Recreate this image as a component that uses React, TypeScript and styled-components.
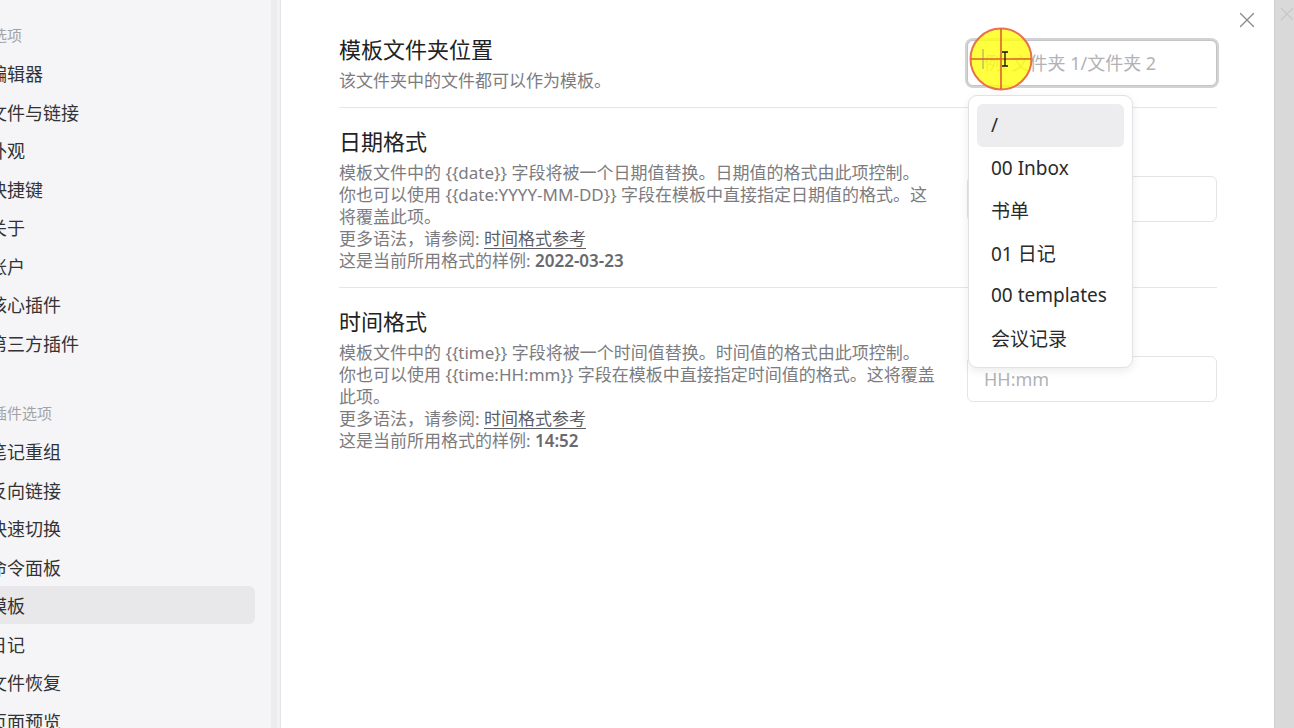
import React from "react";
import styled, { createGlobalStyle } from "styled-components";

const Global = createGlobalStyle`
  html, body { margin: 0; padding: 0; height: 100%; overflow: hidden; background: #ffffff; }
  * { box-sizing: border-box; }
  body { font-family: "Noto Sans", "Noto Sans CJK SC", sans-serif; }
`;

const Page = styled.div`
  display: flex;
  width: 1294px;
  height: 728px;
  overflow: hidden;
  font-family: "Noto Sans", "Noto Sans CJK SC", sans-serif;
`;

const Sidebar = styled.nav`
  flex: 0 0 291px;
  margin-left: -20px;
  background: #f5f5f7;
  padding: 15.25px 16px 0 0;
  display: flex;
  flex-direction: column;
  overflow: hidden;
`;

const NavHeader = styled.div<{ $gap?: number }>`
  flex: 0 0 38.5px;
  display: flex;
  align-items: center;
  padding-left: 12px;
  margin-top: ${(p) => p.$gap ?? 0}px;
  font-size: 15px;
  color: #a3a3a6;
  white-space: nowrap;
`;

const NavItem = styled.div<{ $active?: boolean }>`
  flex: 0 0 38.5px;
  display: flex;
  align-items: center;
  padding-left: 9px;
  font-size: 18px;
  color: #333336;
  border-radius: 6px;
  white-space: nowrap;
  background: ${(p) => (p.$active ? "#e8e8ea" : "transparent")};
`;

const Gutter = styled.div`
  flex: 0 0 10px;
  background: linear-gradient(to right, #ececee 0 6px, #f2f2f4 6px 9px, #e4e4e6 9px 10px);
`;

const Content = styled.main`
  position: relative;
  flex: 1 1 auto;
  background: #ffffff;
  padding: 16px 57px 0 58px;
`;

const CloseButton = styled.div`
  position: absolute;
  top: 12px;
  right: 19px;
  width: 16px;
  height: 16px;
  color: #8c8c8c;
  display: flex;
`;

const SettingItem = styled.section<{ $first?: boolean }>`
  display: flex;
  align-items: center;
  padding: 18px 0 15px;
  border-top: ${(p) => (p.$first ? "none" : "1px solid #e6e6e6")};
`;

const Info = styled.div`
  flex: 1 1 auto;
  padding-right: 24px;
`;

const Name = styled.div`
  font-size: 22px;
  line-height: 30px;
  color: #222224;
  margin-bottom: 6px;
`;

const Desc = styled.div`
  font-size: 17px;
  line-height: 22px;
  color: #7c7c80;
`;

const Link = styled.a`
  color: #5d5d66;
  text-decoration: underline;
  text-underline-offset: 3px;
`;

const Strong = styled.b`
  font-weight: 600;
  color: #6a6a6e;
`;

const Control = styled.div`
  position: relative;
  flex: 0 0 250px;
`;

const TextInput = styled.input<{ $focused?: boolean }>`
  display: block;
  width: 250px;
  height: 46px;
  border: 1px solid ${(p) => (p.$focused ? "#c4c4c6" : "#e4e4e6")};
  box-shadow: ${(p) => (p.$focused ? "0 0 0 2px #d2d2d4" : "none")};
  border-radius: 6px;
  padding: 0 16px;
  font-family: "Noto Sans", "Noto Sans CJK SC", sans-serif;
  font-size: 18px;
  color: #333;
  background: #fff;
  outline: none;
  &::placeholder { color: #b2b2b6; }
`;

const Dropdown = styled.ul`
  position: absolute;
  top: calc(100% + 9px);
  left: 1px;
  width: 165px;
  margin: 0;
  padding: 8px 8px;
  list-style: none;
  background: #fff;
  border: 1px solid #e2e2e4;
  border-radius: 9px;
  box-shadow: 0 3px 10px rgba(0, 0, 0, 0.08);
  z-index: 2;
`;

const Option = styled.li<{ $active?: boolean }>`
  height: 42.5px;
  display: flex;
  align-items: center;
  padding-left: 14px;
  font-size: 19px;
  color: #2a2a2c;
  border-radius: 6px;
  white-space: nowrap;
  background: ${(p) => (p.$active ? "#ededef" : "transparent")};
`;

const CursorMark = styled.svg`
  position: absolute;
  left: 2px;
  top: -13px;
  z-index: 3;
  pointer-events: none;
`;

const Backdrop = styled.div`
  flex: 0 0 19px;
  background: #d9d9d9;
  border-left: 1px solid #cfcfcf;
  padding: 4px 0 0 5px;
  color: #c6c6c6;
`;

const groups = [
  {
    title: "选项",
    items: ["编辑器", "文件与链接", "外观", "快捷键", "关于", "账户", "核心插件", "第三方插件"],
  },
  {
    title: "插件选项",
    items: ["笔记重组", "反向链接", "快速切换", "命令面板", "模板", "日记", "文件恢复", "页面预览"],
  },
];

const folders = ["/", "00 Inbox", "书单", "01 日记", "00 templates", "会议记录"];

const XIcon = ({ size = 16 }: { size?: number }) => (
  <svg width={size} height={size} viewBox="0 0 16 16" fill="none" stroke="currentColor" strokeWidth="1.4" strokeLinecap="round">
    <path d="M1.5 1.5 L14.5 14.5 M14.5 1.5 L1.5 14.5" />
  </svg>
);

export default function App() {
  return (
    <>
      <Global />
      <Page>
        <Sidebar>
          {groups.map((g, gi) => (
            <React.Fragment key={g.title}>
              <NavHeader $gap={gi === 0 ? 0 : 31.5}>{g.title}</NavHeader>
              {g.items.map((it) => (
                <NavItem key={it} $active={it === "模板"}>
                  {it}
                </NavItem>
              ))}
            </React.Fragment>
          ))}
        </Sidebar>
        <Gutter />
        <Content>
          <CloseButton>
            <XIcon />
          </CloseButton>

          <SettingItem $first>
            <Info>
              <Name>模板文件夹位置</Name>
              <Desc>该文件夹中的文件都可以作为模板。</Desc>
            </Info>
            <Control>
              <TextInput $focused placeholder="例: 文件夹 1/文件夹 2" readOnly />
              <CursorMark width="64" height="64" viewBox="0 0 64 64">
                <circle cx="32" cy="32" r="30.5" fill="rgba(255,255,20,0.82)" stroke="rgba(232,96,70,0.9)" strokeWidth="2" />
                <path d="M2 32 H62 M32 2 V62" stroke="rgba(214,70,40,0.85)" strokeWidth="1.6" />
                <path d="M14 22 V42" stroke="rgba(120,120,120,0.6)" strokeWidth="1.2" />
                <path d="M33 25 H39 M36 25 V39 M33 39 H39" stroke="#111" strokeWidth="1.3" fill="none" />
              </CursorMark>
              <Dropdown>
                {folders.map((f, i) => (
                  <Option key={f} $active={i === 0}>
                    {f}
                  </Option>
                ))}
              </Dropdown>
            </Control>
          </SettingItem>

          <SettingItem>
            <Info>
              <Name>日期格式</Name>
              <Desc>
                模板文件中的 {"{{date}}"} 字段将被一个日期值替换。日期值的格式由此项控制。
                <br />
                你也可以使用 {"{{date:YYYY-MM-DD}}"} 字段在模板中直接指定日期值的格式。这
                <br />
                将覆盖此项。
                <br />
                更多语法，请参阅: <Link>时间格式参考</Link>
                <br />
                这是当前所用格式的样例: <Strong>2022-03-23</Strong>
              </Desc>
            </Info>
            <Control>
              <TextInput placeholder="YYYY-MM-DD" readOnly />
            </Control>
          </SettingItem>

          <SettingItem>
            <Info>
              <Name>时间格式</Name>
              <Desc>
                模板文件中的 {"{{time}}"} 字段将被一个时间值替换。时间值的格式由此项控制。
                <br />
                你也可以使用 {"{{time:HH:mm}}"} 字段在模板中直接指定时间值的格式。这将覆盖
                <br />
                此项。
                <br />
                更多语法，请参阅: <Link>时间格式参考</Link>
                <br />
                这是当前所用格式的样例: <Strong>14:52</Strong>
              </Desc>
            </Info>
            <Control>
              <TextInput placeholder="HH:mm" readOnly />
            </Control>
          </SettingItem>
        </Content>
        <Backdrop>
          <XIcon size={14} />
        </Backdrop>
      </Page>
    </>
  );
}
